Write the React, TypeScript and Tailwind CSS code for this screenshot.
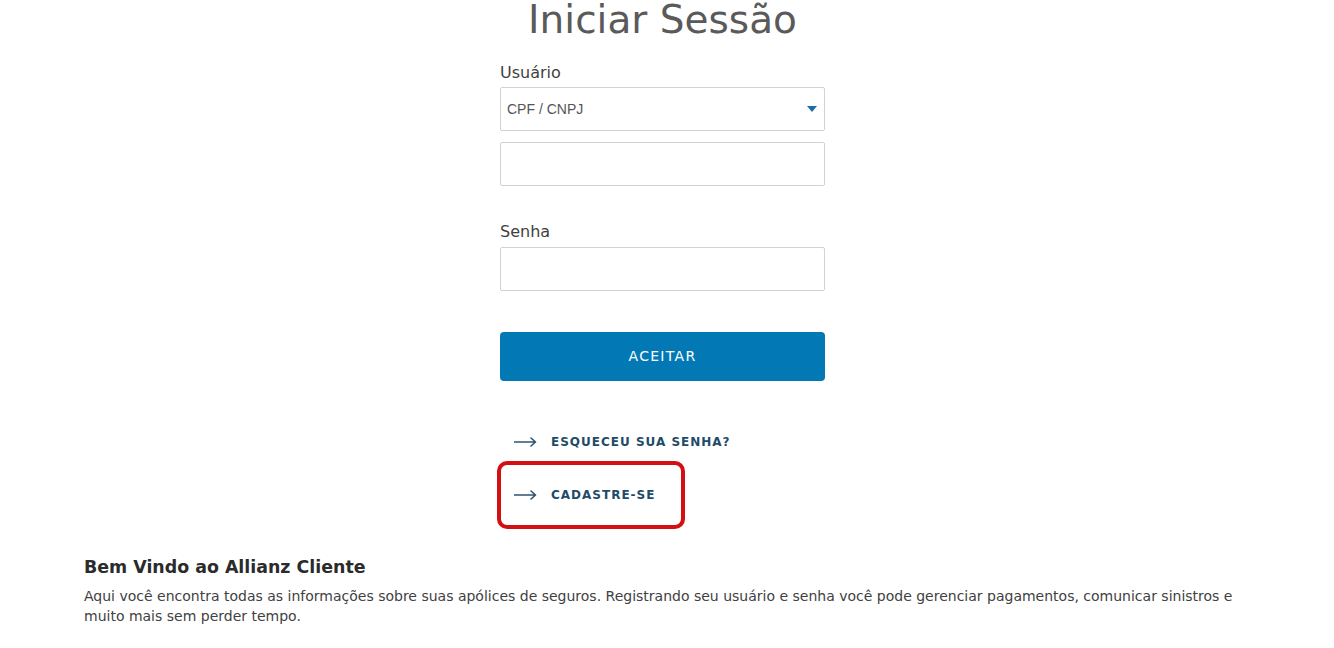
import { useState } from 'react'

function ArrowRight() {
  return (
    <svg width="23" height="10" viewBox="0 0 23 10" fill="none" className="shrink-0">
      <path d="M0 5h21M17 1l4.5 4L17 9" stroke="#2f5470" strokeWidth="1.6" strokeLinecap="round" strokeLinejoin="round" />
    </svg>
  )
}

function LinkRow({ label }: { label: string }) {
  return (
    <a href="#" className="flex h-5 items-center gap-[14px] pl-[14px]">
      <ArrowRight />
      <span className="font-['DejaVu_Sans',sans-serif] text-[12px] font-bold uppercase tracking-[1px] text-[#1f4b68]">
        {label}
      </span>
    </a>
  )
}

export default function App() {
  const [docType, setDocType] = useState('cpf')

  return (
    <div className="min-h-[648px] bg-white">
      <div className="flex justify-center pr-[9px]">
        <form className="flex w-[325px] flex-col" onSubmit={(e) => e.preventDefault()}>
          <h1 className="mb-[22px] text-center font-['DejaVu_Sans',sans-serif] text-[39px] leading-none text-[#5a5a5a]">
            Iniciar Sessão
          </h1>

          <label className="font-['DejaVu_Sans',sans-serif] text-[16px] leading-6 text-[#3f3f3f]">Usuário</label>
          <div className="relative mt-[2px]">
            <select
              value={docType}
              onChange={(e) => setDocType(e.target.value)}
              className="h-[44px] w-full appearance-none rounded-[2px] border border-[#d2d2d2] bg-white pl-[6px] font-['Liberation_Sans',Arial,sans-serif] text-[14px] text-[#555]"
            >
              <option value="cpf">CPF / CNPJ</option>
            </select>
            <svg width="10" height="6" viewBox="0 0 10 6" className="pointer-events-none absolute right-[8px] top-[19px]">
              <path d="M0 0h10L5 6z" fill="#1a6fa8" />
            </svg>
          </div>
          <input className="mt-[11px] h-[44px] w-full rounded-[2px] border border-[#d2d2d2] bg-white" />

          <label className="mt-[34px] font-['DejaVu_Sans',sans-serif] text-[16px] leading-6 text-[#3f3f3f]">Senha</label>
          <input type="password" className="mt-[3px] h-[44px] w-full rounded-[2px] border border-[#d2d2d2] bg-white" />

          <button
            type="submit"
            className="mt-[41px] h-[49px] w-full rounded-[4px] bg-[#0279b5] font-['DejaVu_Sans',sans-serif] text-[14px] uppercase tracking-[1.3px] text-white"
          >
            Aceitar
          </button>

          <div className="mt-[51px] flex flex-col gap-[33px]">
            <LinkRow label="Esqueceu sua senha?" />
            <div className="relative">
              <LinkRow label="Cadastre-se" />
              <div className="pointer-events-none absolute left-[-3px] top-[-24px] h-[68px] w-[188px] rounded-[10px] border-4 border-[#d40f14]" />
            </div>
          </div>
        </form>
      </div>

      <section className="mt-[50px] px-[84px] font-['DejaVu_Sans',sans-serif]">
        <h2 className="text-[17.4px] font-bold leading-6 text-[#2b2b2b]">Bem Vindo ao Allianz Cliente</h2>
        <p className="mt-[7px] max-w-[1160px] text-[14px] leading-5 text-[#414141]">
          Aqui você encontra todas as informações sobre suas apólices de seguros. Registrando seu usuário e senha você
          pode gerenciar pagamentos, comunicar sinistros e muito mais sem perder tempo.
        </p>
      </section>
    </div>
  )
}
